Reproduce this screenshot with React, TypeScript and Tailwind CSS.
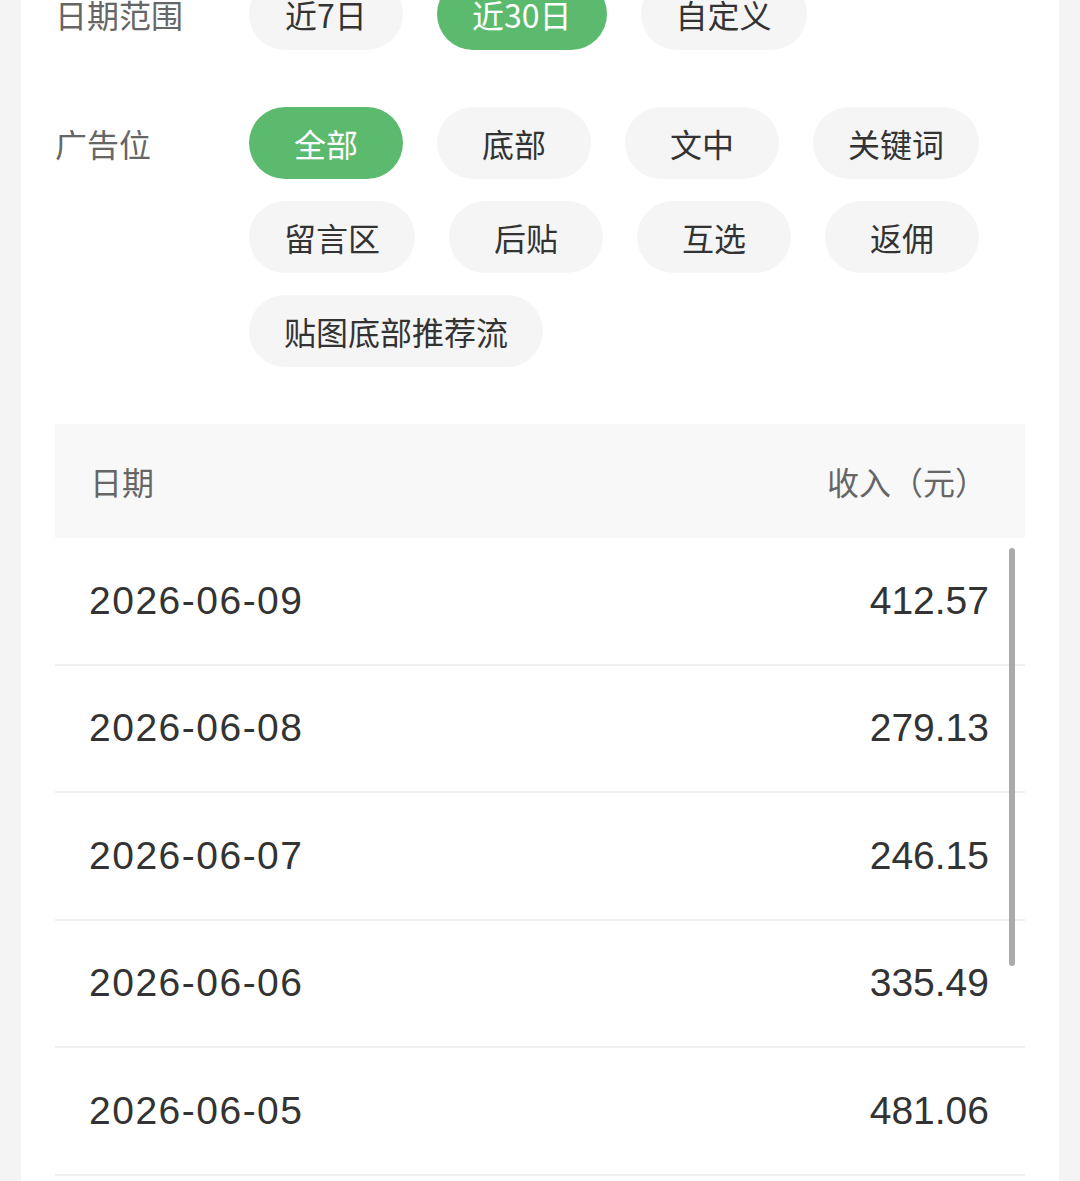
import { useState } from 'react';

const DATE_RANGES = ['近7日', '近30日', '自定义'];
const AD_SLOTS = ['全部', '底部', '文中', '关键词', '留言区', '后贴', '互选', '返佣', '贴图底部推荐流'];

const ROWS = [
  { date: '2026-06-09', income: '412.57' },
  { date: '2026-06-08', income: '279.13' },
  { date: '2026-06-07', income: '246.15' },
  { date: '2026-06-06', income: '335.49' },
  { date: '2026-06-05', income: '481.06' },
];

const CJK = "font-['Noto_Sans_CJK_SC','Noto_Sans',sans-serif]";
const NUM = "font-['Liberation_Sans','Noto_Sans_CJK_SC',sans-serif]";

function Pill({ label, active, onClick }: { label: string; active: boolean; onClick: () => void }) {
  return (
    <button
      onClick={onClick}
      className={`h-[72px] min-w-[154px] px-[35px] rounded-full text-[32px] leading-none flex items-center justify-center ${CJK} ${
        active ? 'bg-[#5cba6e] text-white' : 'bg-[#f5f5f5] text-[#333]'
      }`}
    >
      {label}
    </button>
  );
}

function FilterRow({ title, children }: { title: string; children: React.ReactNode }) {
  return (
    <div className="flex items-start">
      <div className={`w-[194px] shrink-0 h-[72px] flex items-center text-[32px] text-[#666] ${CJK}`}>{title}</div>
      <div className="flex flex-wrap gap-x-[34px] gap-y-[22px] flex-1">{children}</div>
    </div>
  );
}

export default function App() {
  const [range, setRange] = useState('近30日');
  const [slot, setSlot] = useState('全部');

  return (
    <div className="min-h-screen bg-[#f4f4f4] px-[21px] overflow-hidden h-[1181px]">
      <div className="bg-white px-[34px] -mt-[22px] min-h-[1250px] flex flex-col gap-[57px]">
        <FilterRow title="日期范围">
          {DATE_RANGES.map(r => (
            <Pill key={r} label={r} active={r === range} onClick={() => setRange(r)} />
          ))}
        </FilterRow>

        <FilterRow title="广告位">
          {AD_SLOTS.map(s => (
            <Pill key={s} label={s} active={s === slot} onClick={() => setSlot(s)} />
          ))}
        </FilterRow>

        {/* Table */}
        <div>
          <div className={`h-[114px] bg-[#f8f8f8] flex items-center justify-between pl-[35px] pr-[38px] text-[32px] text-[#666] ${CJK}`}>
            <span>日期</span>
            <span>收入（元）</span>
          </div>
          <div className="relative">
            {ROWS.map(row => (
              <div
                key={row.date}
                className={`h-[127.5px] border-b-2 border-[#efefef] flex items-center justify-between pl-[34px] pr-[36px] text-[39px] text-[#333] ${NUM}`}
              >
                <span className="tracking-[1.5px]">{row.date}</span>
                <span>{row.income}</span>
              </div>
            ))}
            {/* scrollbar */}
            <div className="absolute right-[10px] top-[10px] w-[6px] h-[418px] rounded-full bg-[#aaa]" />
          </div>
        </div>
      </div>
    </div>
  );
}
